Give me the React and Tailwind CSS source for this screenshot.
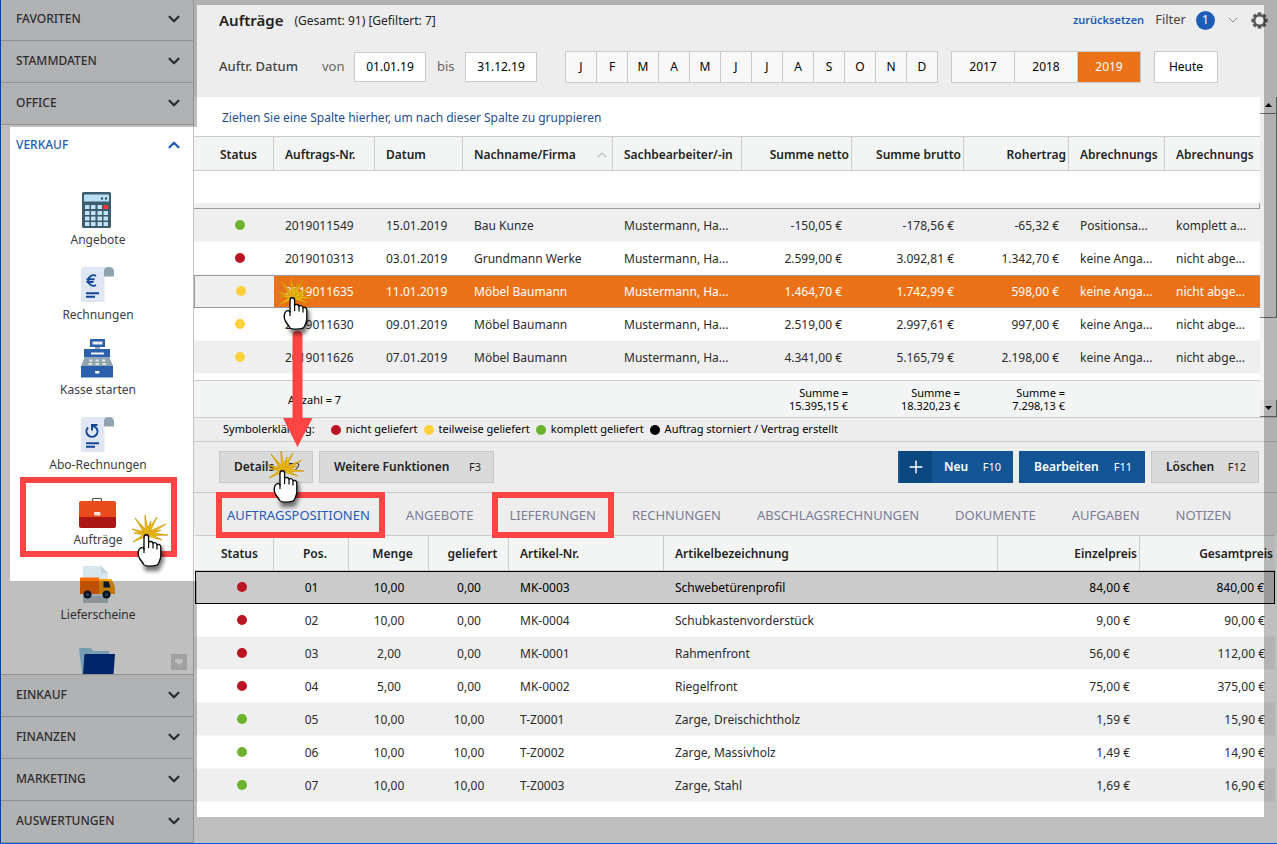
import { ChevronDown, ChevronUp, Plus } from 'lucide-react';
import clsx from 'clsx';

const RED = 'bg-[#bb1422]';
const YELLOW = 'bg-[#ffd23c]';
const GREEN = 'bg-[#6cb22c]';

const months = ['J', 'F', 'M', 'A', 'M', 'J', 'J', 'A', 'S', 'O', 'N', 'D'];
const years = ['2017', '2018', '2019'];

const orders = [
    { dot: GREEN, nr: '2019011549', date: '15.01.2019', name: 'Bau Kunze', netto: '-150,05 €', brutto: '-178,56 €', ertrag: '-65,32 €', a: 'Positionsa...', b: 'komplett a...' },
    { dot: RED, nr: '2019010313', date: '03.01.2019', name: 'Grundmann Werke', netto: '2.599,00 €', brutto: '3.092,81 €', ertrag: '1.342,70 €', a: 'keine Anga...', b: 'nicht abge...' },
    { dot: YELLOW, nr: '2019011635', date: '11.01.2019', name: 'Möbel Baumann', netto: '1.464,70 €', brutto: '1.742,99 €', ertrag: '598,00 €', a: 'keine Anga...', b: 'nicht abge...', selected: true },
    { dot: YELLOW, nr: '2019011630', date: '09.01.2019', name: 'Möbel Baumann', netto: '2.519,00 €', brutto: '2.997,61 €', ertrag: '997,00 €', a: 'keine Anga...', b: 'nicht abge...' },
    { dot: YELLOW, nr: '2019011626', date: '07.01.2019', name: 'Möbel Baumann', netto: '4.341,00 €', brutto: '5.165,79 €', ertrag: '2.198,00 €', a: 'keine Anga...', b: 'nicht abge...' },
];

const positions = [
    [RED, '01', '10,00', '0,00', 'MK-0003', 'Schwebetürenprofil', '84,00 €', '840,00 €'],
    [RED, '02', '10,00', '0,00', 'MK-0004', 'Schubkastenvorderstück', '9,00 €', '90,00 €'],
    [RED, '03', '2,00', '0,00', 'MK-0001', 'Rahmenfront', '56,00 €', '112,00 €'],
    [RED, '04', '5,00', '0,00', 'MK-0002', 'Riegelfront', '75,00 €', '375,00 €'],
    [GREEN, '05', '10,00', '10,00', 'T-Z0001', 'Zarge, Dreischichtholz', '1,59 €', '15,90 €'],
    [GREEN, '06', '10,00', '10,00', 'T-Z0002', 'Zarge, Massivholz', '1,49 €', '14,90 €'],
    [GREEN, '07', '10,00', '10,00', 'T-Z0003', 'Zarge, Stahl', '1,69 €', '16,90 €'],
];

const legend = [
    [RED, 'nicht geliefert'],
    [YELLOW, 'teilweise geliefert'],
    [GREEN, 'komplett geliefert'],
    ['bg-black', 'Auftrag storniert / Vertrag erstellt'],
];

const tabs = ['AUFTRAGSPOSITIONEN', 'ANGEBOTE', 'LIEFERUNGEN', 'RECHNUNGEN', 'ABSCHLAGSRECHNUNGEN', 'DOKUMENTE', 'AUFGABEN', 'NOTIZEN'];

/* ---------- icons ---------- */

const IconBox = ({ children }) => (
    <svg viewBox="0 0 40 44" className="h-11 w-10" aria-hidden="true">{children}</svg>
);

const CalculatorIcon = () => (
    <IconBox>
        <rect x="5" y="5" width="29" height="36" rx="1.5" fill="#3d5d6e" />
        <rect x="7" y="7.500" width="25" height="7" fill="#b9dff5" />
        <path d="M24 11.500h2M28 11.500h2" stroke="#27404f" strokeWidth="2" />
        {[18, 24, 29.5, 35].map((y, r) => [8, 14, 20.500, 26.5].map((x, c) => (
            <rect key={`${r}${c}`} x={x} y={y} width="4.500" height="4" rx="0.6" fill={r === 0 && c === 3 ? '#f8393c' : '#c3e4f7'} />
        )))}
    </IconBox>
);

const Sheet = () => (
    <>
        <path d="M6.500 5H30L27.500 9V40H4V9Q4 5 6.500 5Z" fill="#dfe6f4" />
        <path d="M27 14V9Q27 5 32 5t5 5v4.500H27Z" fill="#8fa4b0" />
    </>
);

const InvoiceIcon = () => (
    <IconBox>
        <Sheet />
        <path d="M19 13.800A5.300 5.300 0 1 0 19 23.200M9.500 17.300h8M9.500 20h7" stroke="#134896" strokeWidth="1.900" fill="none" />
        <path d="M9 31.200h13M9 34.700h9" stroke="#134896" strokeWidth="1.900" />
    </IconBox>
);

const SubscriptionIcon = () => (
    <IconBox>
        <Sheet />
        <path d="M11 15.500A5.500 5.500 0 1 0 19.500 16.200L15.300 13.300" stroke="#134896" strokeWidth="2" fill="none" />
        <path d="M20.500 13H15V18.500" stroke="#134896" strokeWidth="2" fill="none" />
        <path d="M9 31.200h13M9 34.700h9" stroke="#134896" strokeWidth="1.900" />
    </IconBox>
);

const RegisterIcon = () => (
    <IconBox>
        <path d="M13 2h15v8H13Z" fill="#2c5fac" />
        <path d="M15.500 4.500h10v3h-10Z" fill="#e8edf2" />
        <path d="M18 10h5v2h-5Z" fill="#8fa4b0" />
        <path d="M7 12h26v8.500H7Z" fill="#2c5fac" />
        <path d="M14 15.500h13v2H14Z" fill="#f3f5f7" />
        <path d="M7.500 20.500h25L36 29H4Z" fill="#8fa4b0" />
        <path d="M12 23.500h3.500M18.500 23.500H22M25 23.500h3.500M11.500 27H15M18.500 27H22M25.500 27H29" stroke="#e3e5df" strokeWidth="2" />
        <path d="M4 29h32v11.500H4Z" fill="#2c5fac" />
        <rect x="18" y="34" width="4.500" height="2.500" rx="1" fill="#fff" />
    </IconBox>
);

const BriefcaseIcon = () => (
    <IconBox>
        <path d="M15.500 14v-1.500q0-1 1-1h7q1 0 1 1V14" stroke="#4b4b4b" strokeWidth="1.200" fill="none" />
        <path d="M4 14H37Q39 14 39 16V30H2V16Q2 14 4 14Z" fill="#e94b1d" />
        <path d="M2 30H39V39Q39 41 37 41H4Q2 41 2 39Z" fill="#ac1614" />
        <rect x="17" y="25" width="6.500" height="3.500" rx="0.800" fill="#f7e3dc" />
    </IconBox>
);

const TruckIcon = () => (
    <IconBox>
        <path d="M6 4H24l7 7V41H6Z" fill="#d8e6ee" />
        <path d="M24 4l7 7H24Z" fill="#c2d4de" />
        <path d="M6 34H31V41H6Z" fill="#b9c7cf" />
        <path d="M3 15.500H22V32H3Z" fill="#ff6d06" />
        <path d="M22 17h11q2 0 2.500 2l2.500 6v7H22Z" fill="#ffa408" />
        <path d="M26.500 19.500h5l2 6h-7Z" fill="#0a1c33" />
        <circle cx="10.500" cy="32.500" r="4" fill="#0a1c33" />
        <circle cx="29.500" cy="32.500" r="4" fill="#0a1c33" />
        <circle cx="10.500" cy="32.500" r="1.500" fill="#3e5573" />
        <circle cx="29.500" cy="32.500" r="1.500" fill="#3e5573" />
    </IconBox>
);

const FolderIcon = () => (
    <IconBox>
        <path d="M2 12q0-1 1-1h11l2 3h15q1 0 1 1v29H6Z" fill="#9fd2ee" />
        <path d="M7.500 17H38L36 44H5.500Z" fill="#00318c" />
    </IconBox>
);

const GearIcon = () => (
    <svg viewBox="0 0 17 17" className="size-[17px]" aria-hidden="true">
        {[0, 45, 90, 135].map((deg) => (
            <path key={deg} d="M8.500 0.400V16.600" stroke="#585858" strokeWidth="3.600" transform={`rotate(${deg} 8.500 8.500)`} />
        ))}
        <circle cx="8.500" cy="8.500" r="5.200" fill="#ededed" stroke="#585858" strokeWidth="2.400" />
    </svg>
);

const rays = [[4, 3], [14, 0], [26, 2], [20, 6], [35, 9], [37, 20], [31, 25], [1, 14], [3, 18], [2, 27], [9, 9], [30, 15]];

const ClickHand = ({ className }) => (
    <svg viewBox="0 0 40 60" className={clsx('absolute h-[60px] w-10', className)} aria-hidden="true">
        {rays.map(([x, y]) => {
            const dx = x - 16;
            const dy = y - 19;
            const len = Math.hypot(dx, dy);
            const nx = (-dy / len) * 1.7;
            const ny = (dx / len) * 1.7;
            return <path key={`${x}-${y}`} d={`M${16 + nx} ${19 + ny}L${x} ${y}L${16 - nx} ${19 - ny}Z`} fill="#f2c11c" stroke="#d09a04" strokeWidth="0.8" />;
        })}
        <circle cx="16" cy="19" r="3.500" fill="#e2aa0a" />
        <path className="blur-[2px]" d="M10 36L15 30L32 32L33 45L28 56H14Z" fill="#000" opacity="0.55" />
        <path
            d="M13 34V22.200C13 18.900 17.600 18.900 17.600 22.200V27.500C18.500 25.800 21.800 26.200 22 28.400C23.200 27 25.800 27.600 26 29.800C27.400 28.800 29.800 29.600 29.800 32V41C29.800 44 28.400 46 27.600 48C27 52 12.800 52 12.200 48.500L8.600 43.500C7 40.500 7 37 8 34.700C9.300 32 12 32 13 34Z"
            fill="#fff" stroke="#000" strokeWidth="1.300" strokeLinejoin="round"
        />
        <path d="M17.600 27.500V33M22 28.500V33.500M26 30V34.500M13 33V38" stroke="#000" strokeWidth="1.200" />
    </svg>
);

/* ---------- sidebar ---------- */

const modules = [
    ['Angebote', CalculatorIcon],
    ['Rechnungen', InvoiceIcon],
    ['Kasse starten', RegisterIcon],
    ['Abo-Rechnungen', SubscriptionIcon],
    ['Aufträge', BriefcaseIcon],
    ['Lieferscheine', TruckIcon],
    ['', FolderIcon],
];

const SectionButton = ({ label, className }) => (
    <button className={clsx('flex h-[42px] shrink-0 items-center justify-between border-[#c2c2c2] bg-[#edeef0] pr-2.5 pb-0.5 pl-[15px] font-medium text-[#3b3c43]', className)}>
        {label}
        <ChevronDown size={18} strokeWidth={3} />
    </button>
);

function Sidebar() {
    return (
        <aside className="flex w-[194px] shrink-0 flex-col border-r border-l border-r-[#c4c4c4] border-l-[#005dd5] bg-white text-xs">
            <SectionButton label="FAVORITEN" className="-mt-px border-b" />
            <SectionButton label="STAMMDATEN" className="border-b" />
            <SectionButton label="OFFICE" className="border-b" />
            <button className="flex h-10 shrink-0 items-center justify-between pr-2.5 pl-[15px] font-medium text-[#1f5cb8]">
                VERKAUF
                <ChevronUp size={18} strokeWidth={3} />
            </button>
            <nav className="relative min-h-0 flex-1 overflow-hidden pt-[22px]">
                {modules.map(([label, Icon]) => (
                    <a key={label} href="#" aria-label={label || 'Ordner'} className="mb-[13px] flex flex-col items-center text-[#3b3c43]">
                        <Icon />
                        <span className="h-[18px] pl-0.5 leading-[18px]">{label}</span>
                    </a>
                ))}
                <button aria-label="Mehr" className="absolute right-1.5 bottom-1 flex size-4 items-center justify-center bg-[#d4d6d6]">
                    <svg viewBox="0 0 8 6" className="h-1.5 w-2" aria-hidden="true"><path d="M0 1L1 0H7L8 1V3L4 6L0 3Z" fill="#fff" /></svg>
                </button>
            </nav>
            <SectionButton label="EINKAUF" className="border-t" />
            <SectionButton label="FINANZEN" className="border-t" />
            <SectionButton label="MARKETING" className="border-t" />
            <SectionButton label="AUSWERTUNGEN" className="h-[43px] border-y" />
        </aside>
    );
}

/* ---------- header ---------- */

const Segment = ({ active, wide, children }) => (
    <button className={clsx('-ml-px h-8 border border-[#cbcbcb]', wide ? 'w-16' : 'w-8', active ? 'bg-[#ec7219] text-white' : 'bg-[#f8f8f8] text-black')}>
        {children}
    </button>
);

function Header() {
    return (
        <header className="bg-[#ededed] pr-[9px] pb-1 pl-[25px]">
            <div className="flex h-10 items-center">
                <h1 className="text-[15px] font-semibold text-[#222]">Aufträge</h1>
                <span className="ml-[11px] pt-0.5 text-xs text-[#222]">(Gesamt: 91) [Gefiltert: 7]</span>
                <a href="#" className="ml-auto text-[11px] font-semibold text-[#1f5cb8]">zurücksetzen</a>
                <span className="ml-[11px] text-[13px] text-[#444]">Filter</span>
                <span className="ml-2.5 flex size-[19px] items-center justify-center rounded-full bg-[#1f5cb8] text-xs text-white">1</span>
                <button aria-label="Filter öffnen" className="ml-2.5 text-[#888]"><ChevronDown size={16} strokeWidth={1.5} /></button>
                <button aria-label="Einstellungen" className="ml-2.5"><GearIcon /></button>
            </div>
            <div className="flex h-[53px] items-center text-xs">
                <span className="w-[103px] text-[13px] font-medium text-[#444]">Auftr. Datum</span>
                <label htmlFor="von" className="w-8 text-[13px] text-[#666]">von</label>
                <input id="von" defaultValue="01.01.19" className="h-[30px] w-[72px] border border-[#cbcbcb] bg-white text-center text-black" />
                <label htmlFor="bis" className="w-[39px] pl-[11px] text-[13px] text-[#666]">bis</label>
                <input id="bis" defaultValue="31.12.19" className="h-[30px] w-[72px] border border-[#cbcbcb] bg-white text-center text-black" />
                <div className="ml-[29px] flex">
                    {months.map((m, i) => <Segment key={i}>{m}</Segment>)}
                </div>
                <div className="ml-3.5 flex">
                    {years.map((y) => <Segment key={y} wide active={y === '2019'}>{y}</Segment>)}
                </div>
                <button className="ml-[13px] h-8 w-16 border border-[#cbcbcb] bg-white text-black">Heute</button>
            </div>
        </header>
    );
}

/* ---------- tables ---------- */

const Dot = ({ color }) => <span className={clsx('inline-block size-2.5 rounded-full', color)} />;

const thAlign = {
    left: 'pl-[11px] text-left',
    center: 'pl-2 text-center',
    right: 'pr-0.5 text-right',
    status: 'pl-[26px] text-left',
};

const Th = ({ children, align = 'left', last }) => (
    <th className={clsx('overflow-hidden border-y border-[#cbcbcb] bg-[#f3f5f5] pt-0.5 font-semibold text-[#222]', thAlign[align], !last && 'border-r')}>
        {children}
    </th>
);

function OrdersTable() {
    return (
        <table className="w-full table-fixed border-separate border-spacing-0 text-xs whitespace-nowrap text-[#2b2b2b]">
            <colgroup>
                <col className="w-20" />
                <col className="w-[101px]" />
                <col className="w-[88px]" />
                <col />
                <col className="w-[129px]" />
                <col className="w-[110px]" />
                <col className="w-28" />
                <col className="w-[105px]" />
                <col className="w-24" />
                <col className="w-[95px]" />
            </colgroup>
            <thead>
                <tr className="h-[35px]">
                    <Th align="status">Status</Th>
                    <Th>Auftrags-Nr.</Th>
                    <Th>Datum</Th>
                    <Th>
                        <div className="flex items-center justify-between pr-0.5">
                            Nachname/Firma
                            <ChevronUp size={16} strokeWidth={2} className="text-[#c4c4c4]" />
                        </div>
                    </Th>
                    <Th>Sachbearbeiter/-in</Th>
                    <Th align="right">Summe netto</Th>
                    <Th align="right">Summe brutto</Th>
                    <Th align="right">Rohertrag</Th>
                    <Th>Abrechnungs</Th>
                    <Th last>Abrechnungs</Th>
                </tr>
                <tr className="h-8">
                    <td colSpan={10} className="bg-white" />
                </tr>
                <tr className="h-1.5">
                    <td colSpan={10} className="border-r border-b border-[#999] bg-[#eee]" />
                </tr>
            </thead>
            <tbody>
                {orders.map((o, i) => {
                    const line = o.selected ? 'border-y border-[#999]' : 'border-y border-t-transparent border-b-[#f8f8f8]';
                    const cell = clsx('pl-[11px]', line, o.selected && 'bg-[#ec7219] text-white');
                    const num = clsx(cell, 'pr-2.5 text-right');
                    return (
                        <tr key={o.nr} className={clsx('h-[33px]', i % 2 === 0 && 'bg-[#efefef]')}>
                            <td className={clsx('pl-3 text-center', line, o.selected && 'border-l')}><Dot color={o.dot} /></td>
                            <td className={cell}>{o.nr}</td>
                            <td className={cell}>{o.date}</td>
                            <td className={cell}>{o.name}</td>
                            <td className={cell}>Mustermann, Ha...</td>
                            <td className={num}>{o.netto}</td>
                            <td className={num}>{o.brutto}</td>
                            <td className={num}>{o.ertrag}</td>
                            <td className={cell}>{o.a}</td>
                            <td className={cell}>{o.b}</td>
                        </tr>
                    );
                })}
                <tr className="h-1.5">
                    <td colSpan={10} />
                </tr>
            </tbody>
            <tfoot className="bg-[#f3f5f5] text-[11px] leading-[13px] text-black">
                <tr className="h-[37px]">
                    <td className="border-t border-[#cbcbcb]" />
                    <td colSpan={4} className="border-t border-[#cbcbcb] pl-3.5">Anzahl = 7</td>
                    <td className="border-t border-[#cbcbcb] pr-1 text-right">Summe =<br />15.395,15 €</td>
                    <td className="border-t border-[#cbcbcb] pr-1 text-right">Summe =<br />18.320,23 €</td>
                    <td className="border-t border-[#cbcbcb] pr-1 text-right">Summe =<br />7.298,13 €</td>
                    <td colSpan={2} className="border-t border-[#cbcbcb]" />
                </tr>
            </tfoot>
        </table>
    );
}

const ScrollBar = () => (
    <div className="flex w-[17px] shrink-0 flex-col bg-[#f6f6f6]">
        <button aria-label="Nach oben" className="flex h-[17px] items-center justify-center border-r border-b border-[#777] bg-[#ededed]">
            <svg viewBox="0 0 7 4" className="h-1 w-[7px]" aria-hidden="true"><path d="M0 4L3.500 0L7 4Z" /></svg>
        </button>
        <div className="h-[204px] border-r border-b border-[#777] bg-[#ededed]" />
        <button aria-label="Nach unten" className="mt-auto flex h-[17px] items-center justify-center border-r border-b border-[#777] bg-[#ededed]">
            <svg viewBox="0 0 7 4" className="h-1 w-[7px]" aria-hidden="true"><path d="M0 0L3.500 4L7 0Z" /></svg>
        </button>
    </div>
);

function PositionsTable() {
    return (
        <table className="w-full table-fixed border-separate border-spacing-0 text-xs whitespace-nowrap text-[#2b2b2b]">
            <colgroup>
                <col className="w-[79px]" />
                <col className="w-[75px]" />
                <col className="w-20" />
                <col className="w-20" />
                <col className="w-[155px]" />
                <col />
                <col className="w-[142px]" />
                <col className="w-[135px]" />
            </colgroup>
            <thead>
                <tr className="h-9">
                    <Th align="status">Status</Th>
                    <Th align="center">Pos.</Th>
                    <Th align="center">Menge</Th>
                    <Th align="center">geliefert</Th>
                    <Th>Artikel-Nr.</Th>
                    <Th>Artikelbezeichnung</Th>
                    <Th align="right">Einzelpreis</Th>
                    <Th align="right" last>Gesamtpreis</Th>
                </tr>
            </thead>
            <tbody>
                {positions.map(([dot, pos, menge, geliefert, nr, name, einzel, gesamt], i) => {
                    const cell = i === 0 ? 'border-y border-black bg-[#cbcbcb] text-black' : 'border-y border-t-transparent border-b-[#f8f8f8]';
                    return (
                        <tr key={pos} className={clsx('h-[33px]', i % 2 === 0 && 'bg-[#efefef]')}>
                            <td className={clsx(cell, 'pl-3.5 text-center', i === 0 && 'border-l')}><Dot color={dot} /></td>
                            <td className={clsx(cell, 'text-center')}>{pos}</td>
                            <td className={clsx(cell, 'text-center')}>{menge}</td>
                            <td className={clsx(cell, 'text-center')}>{geliefert}</td>
                            <td className={clsx(cell, 'pl-[11px]')}>{nr}</td>
                            <td className={clsx(cell, 'pl-[11px]')}>{name}</td>
                            <td className={clsx(cell, 'pr-2.5 text-right')}>{einzel}</td>
                            <td className={clsx(cell, 'pr-2.5 text-right', i === 0 && 'border-r')}>{gesamt}</td>
                        </tr>
                    );
                })}
            </tbody>
        </table>
    );
}

const ActionButton = ({ label, hotkey, primary, className }) => (
    <button className={clsx('flex h-8 items-center justify-between border pr-3 pl-3.5 text-xs', primary ? 'border-[#125494] bg-[#125494] text-white' : 'border-[#c8c8c8] bg-[#dadada] text-[#222]', className)}>
        <span className="font-semibold">{label}</span>
        <span className="text-[11px]">{hotkey}</span>
    </button>
);

export default function App() {
    return (
        <div className="relative flex h-screen overflow-hidden border-b border-[#005dd5] bg-white font-['Noto_Sans','Open_Sans',sans-serif]">
            <Sidebar />
            <main className="min-w-0 flex-1">
                <Header />
                <div className="flex">
                    <div className="min-w-0 flex-1">
                        <p className="h-[39px] pl-7 text-xs leading-[41px] text-[#244f92]">Ziehen Sie eine Spalte hierher, um nach dieser Spalte zu gruppieren</p>
                        <OrdersTable />
                    </div>
                    <ScrollBar />
                </div>
                <div className="flex h-6 items-center gap-1.5 border-t border-[#cbcbcb] bg-[#ededed] pl-[29px] text-[11px] text-black">
                    <span className="mr-2.5">Symbolerklärung:</span>
                    {legend.map(([color, text]) => (
                        <span key={text} className="flex items-center gap-[5px]"><Dot color={color} />{text}</span>
                    ))}
                </div>
                <div className="flex h-[51px] items-center gap-1.5 border-t border-[#cbcbcb] bg-[#ededed] pr-[18px] pl-[25px]">
                    <ActionButton label="Details" hotkey="F2" className="w-[94px]" />
                    <ActionButton label="Weitere Funktionen" hotkey="F3" className="w-[175px]" />
                    <button className="ml-auto flex h-8 w-[115px] items-center bg-[#125494] pr-3 pl-0.5 text-xs text-white">
                        <span className="flex h-8 w-8 items-center justify-center bg-[#0b4880]"><Plus size={20} strokeWidth={1.75} /></span>
                        <span className="ml-3 font-semibold">Neu</span>
                        <span className="ml-auto text-[11px]">F10</span>
                    </button>
                    <ActionButton label="Bearbeiten" hotkey="F11" primary className="w-[126px]" />
                    <ActionButton label="Löschen" hotkey="F12" className="w-[108px]" />
                </div>
                <div className="flex h-[43px] items-center gap-9 border-t border-[#cbcbcb] bg-[#ededed] pt-1 pl-[33px] text-[13px]">
                    {tabs.map((t, i) => (
                        <button key={t} className={i === 0 ? 'text-[#1f5cb8]' : 'text-[#7b7d95]'}>{t}</button>
                    ))}
                </div>
                <div className="pr-0.5 pl-px">
                    <PositionsTable />
                </div>
            </main>

            {/* dimmed surroundings with the highlighted area cut out */}
            <div className="pointer-events-none absolute inset-0 bg-black/25 [clip-path:polygon(evenodd,0_0,100%_0,100%_100%,0_100%,0_0,10px_127px,197px_127px,197px_5px,calc(100%-13px)_5px,calc(100%-13px)_817px,197px_817px,197px_581px,10px_581px,10px_127px,0_0)]" />

            {/* guide marks */}
            <div className="pointer-events-none absolute inset-0">
                <div className="absolute top-[477px] left-5 h-20 w-[157px] border-6 border-[#ff4444]" />
                <div className="absolute top-[492px] left-[216px] h-[46px] w-[169px] border-6 border-[#ff4444]" />
                <div className="absolute top-[492px] left-[492px] h-[46px] w-[122px] border-6 border-[#ff4444]" />
                <svg viewBox="0 0 30 118" className="absolute top-[330px] left-[283px] h-[118px] w-[30px]" aria-hidden="true">
                    <path d="M9.500 88V5Q9.500 1 14.500 1T19.500 5V88H29.500L14.500 117L0 88Z" fill="#ff4444" />
                </svg>
                <ClickHand className="top-[278px] left-[277px]" />
                <ClickHand className="top-[451px] left-[267px]" />
                <ClickHand className="top-[515px] left-[131px]" />
            </div>
        </div>
    );
}
